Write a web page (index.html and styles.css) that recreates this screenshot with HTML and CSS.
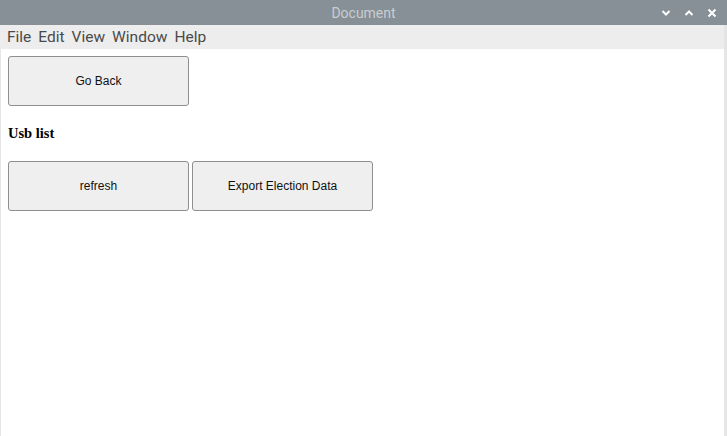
FILE: index.html
```html
<!DOCTYPE html>
<html>
<head>
<meta charset="utf-8">
<link rel="stylesheet" href="styles.css">
</head>
<body>
<div class="window">
  <div class="titlebar">
    <span class="title">Document</span>
    <div class="controls">
      <svg width="10" height="8" viewBox="0 0 10 8"><path d="M1.5 2 L5 5.5 L8.5 2" fill="none" stroke="#fff" stroke-width="2"/></svg>
      <svg width="10" height="8" viewBox="0 0 10 8"><path d="M1.5 6 L5 2.5 L8.5 6" fill="none" stroke="#fff" stroke-width="2"/></svg>
      <svg width="10" height="10" viewBox="0 0 10 10"><path d="M1.5 1.5 L8.5 8.5 M8.5 1.5 L1.5 8.5" fill="none" stroke="#fff" stroke-width="2"/></svg>
    </div>
  </div>
  <div class="menubar">
    <span>File</span><span>Edit</span><span>View</span><span>Window</span><span>Help</span>
  </div>
  <div class="content">
    <div class="row"><button class="btn">Go Back</button></div>
    <h3 class="heading">Usb list</h3>
    <div class="row">
      <button class="btn">refresh</button>
      <button class="btn">Export Election Data</button>
    </div>
  </div>
</div>
</body>
</html>
```
FILE: styles.css
```css
html, body {
  margin: 0;
  padding: 0;
  width: 727px;
  height: 436px;
  overflow: hidden;
  background: #ffffff;
}
.window {
  width: 727px;
  height: 436px;
  display: flex;
  flex-direction: column;
  box-sizing: border-box;
}
.titlebar {
  height: 25px;
  flex: none;
  background: #878f97;
  position: relative;
  display: flex;
  align-items: center;
  justify-content: center;
}
.title {
  font-family: "Roboto", "Liberation Sans", sans-serif;
  font-size: 14px;
  color: #c9cdd1;
}
.controls {
  position: absolute;
  right: 10px;
  top: 8px;
  display: flex;
  gap: 13px;
  align-items: center;
}
.controls svg { display: block; }
.menubar {
  height: 24px;
  flex: none;
  background: #ededed;
  display: flex;
  align-items: center;
  padding-left: 7px;
  gap: 7px;
  font-family: "Roboto", "Liberation Sans", sans-serif;
  font-size: 15.5px;
  color: #4a4a4a;
  border-right: 3px solid #e4e4e4;
}
.content {
  flex: 1;
  border-left: 1px solid #e6e6e6;
  border-right: 3px solid #e6e6e6;
  padding: 7px 7px;
  font-family: "Liberation Serif", serif;
}
.row {
  display: flex;
  gap: 3px;
}
.btn {
  width: 181px;
  height: 50px;
  background: #efefef;
  border: 1px solid #8f8f8f;
  border-radius: 3px;
  font-family: "Liberation Sans", Arial, sans-serif;
  font-size: 12px;
  color: #111;
  padding: 0;
  margin: 0;
}
.heading {
  font-size: 14.5px;
  font-weight: bold;
  margin: 19px 0 19px 0;
  color: #000;
}
```
